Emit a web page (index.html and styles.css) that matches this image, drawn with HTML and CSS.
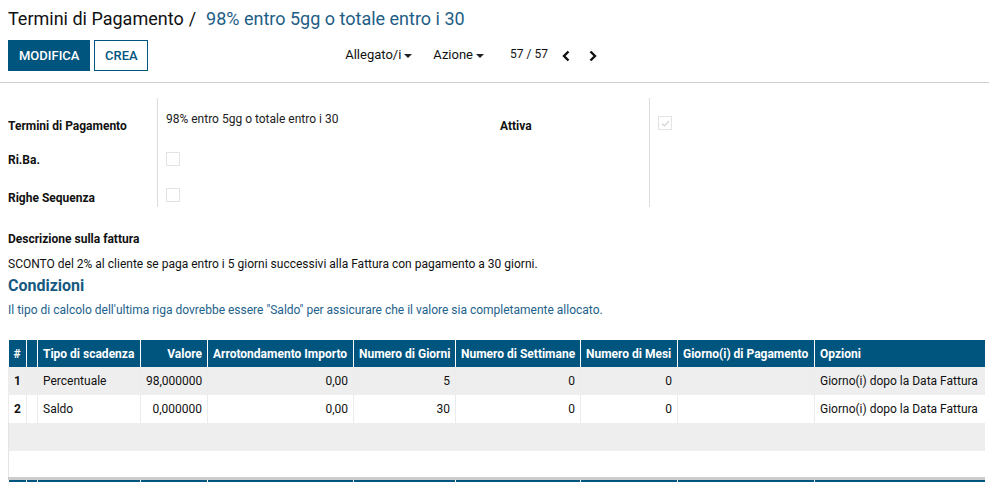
FILE: index.html
```html
<!DOCTYPE html>
<html lang="it">
<head>
<meta charset="utf-8">
<title>Termini di Pagamento</title>
<link rel="stylesheet" href="styles.css">
</head>
<body>
<div class="control-panel">
  <h1 class="breadcrumb"><span class="crumb">Termini di Pagamento</span><span class="sep">/</span><span class="current">98% entro 5gg o totale entro i 30</span></h1>
  <div class="cp-bottom">
    <div class="cp-left">
      <div class="buttons">
        <button class="btn btn-primary">MODIFICA</button>
        <button class="btn btn-secondary">CREA</button>
      </div>
      <div class="sidebar">
        <button class="dd">Allegato/i <span class="caret"></span></button>
        <button class="dd">Azione <span class="caret"></span></button>
      </div>
    </div>
    <div class="cp-right">
      <div class="pager">
        <span class="pager-value">57 / 57</span>
        <button class="pager-btn" aria-label="Precedente"><svg width="10" height="12" viewBox="0 0 10 12"><path d="M7.5 1.5 L3 6 L7.5 10.5" fill="none" stroke="#111" stroke-width="2.4"/></svg></button>
        <button class="pager-btn" aria-label="Successivo"><svg width="10" height="12" viewBox="0 0 10 12"><path d="M2.5 1.5 L7 6 L2.5 10.5" fill="none" stroke="#111" stroke-width="2.4"/></svg></button>
      </div>
    </div>
  </div>
</div>

<div class="sheet">
  <div class="groups">
    <div class="group">
      <div class="lbl r1l">Termini di Pagamento</div>
      <div class="val r1v">98% entro 5gg o totale entro i 30</div>
      <div class="lbl r2l">Ri.Ba.</div>
      <div class="val r2v"><span class="chk"></span></div>
      <div class="lbl r3l">Righe Sequenza</div>
      <div class="val r3v"><span class="chk"></span></div>
    </div>
    <div class="group">
      <div class="lbl r1l">Attiva</div>
      <div class="val r1c"><span class="chk checked"><svg width="11" height="11" viewBox="0 0 11 11"><path d="M2 5.5 L4.5 8 L9 3" fill="none" stroke="#d4d4d4" stroke-width="1.2"/></svg></span></div>
      <div class="lbl fill"></div>
      <div class="val fill"></div>
    </div>
  </div>

  <div class="desc-label">Descrizione sulla fattura</div>
  <div class="desc-text">SCONTO del 2% al cliente se paga entro i 5 giorni successivi alla Fattura con pagamento a 30 giorni.</div>
  <h2 class="section-title">Condizioni</h2>
  <p class="hint">Il tipo di calcolo dell'ultima riga dovrebbe essere "Saldo" per assicurare che il valore sia completamente allocato.</p>

  <table class="lines">
    <colgroup>
      <col class="c-num"><col class="c-blank"><col class="c-tipo"><col class="c-val"><col class="c-arr"><col class="c-gg"><col class="c-set"><col class="c-mesi"><col class="c-pag"><col class="c-opz">
    </colgroup>
    <thead>
      <tr>
        <th>#</th><th></th><th>Tipo di scadenza</th><th class="num">Valore</th><th>Arrotondamento Importo</th><th>Numero di Giorni</th><th>Numero di Settimane</th><th>Numero di Mesi</th><th>Giorno(i) di Pagamento</th><th>Opzioni</th>
      </tr>
    </thead>
    <tbody>
      <tr class="odd">
        <td class="seq">1</td><td></td><td>Percentuale</td><td class="num">98,000000</td><td class="num">0,00</td><td class="num">5</td><td class="num">0</td><td class="num">0</td><td></td><td>Giorno(i) dopo la Data Fattura</td>
      </tr>
      <tr class="even">
        <td class="seq">2</td><td></td><td>Saldo</td><td class="num">0,000000</td><td class="num">0,00</td><td class="num">30</td><td class="num">0</td><td class="num">0</td><td></td><td>Giorno(i) dopo la Data Fattura</td>
      </tr>
      <tr class="odd empty"><td colspan="10"></td></tr>
      <tr class="even empty"><td colspan="10"></td></tr>
    </tbody>
    <tfoot>
      <tr><td></td><td></td><td></td><td></td><td></td><td></td><td></td><td></td><td></td><td></td></tr>
    </tfoot>
  </table>
</div>
</body>
</html>
```

FILE: styles.css
```css
* { box-sizing: border-box; }

html, body {
  margin: 0;
  padding: 0;
  background: #fff;
}

body {
  font-family: Roboto, "Noto Sans", "Liberation Sans", sans-serif;
  font-size: 12px;
  color: #212121;
  overflow: hidden;
}

button {
  font-family: inherit;
  cursor: pointer;
}

/* ---------- control panel ---------- */
.control-panel {
  border-bottom: 1px solid #cfcfcf;
  padding: 8px 0 11px 8px;
}

.breadcrumb {
  margin: 0;
  font-size: 18px;
  font-weight: 400;
  line-height: 22px;
  color: #111;
}

.breadcrumb .sep {
  margin: 0 10px 0 5px;
}

.breadcrumb .current {
  color: #1e5d86;
}

.cp-bottom {
  display: grid;
  grid-template-columns: 476px 1fr;
  margin-top: 10px;
  height: 31px;
}

.cp-left {
  display: flex;
  justify-content: space-between;
  align-items: center;
}

.buttons {
  display: flex;
  gap: 4px;
}

.btn {
  height: 31px;
  font-size: 13px;
  font-weight: 500;
  border-radius: 0;
  padding: 0 10px;
  letter-spacing: 0;
}

.btn-primary {
  width: 82px;
  background: #00557f;
  border: 1px solid #00557f;
  color: #fff;
}

.btn-secondary {
  width: 54px;
  background: #fff;
  border: 1px solid #00557f;
  color: #00557f;
}

.sidebar {
  display: flex;
  gap: 21px;
  align-items: center;
  margin-top: -2px;
}

.dd {
  background: none;
  border: 0;
  padding: 0;
  font-size: 13px;
  color: #111;
  display: flex;
  align-items: center;
  gap: 3px;
}

.caret {
  display: inline-block;
  width: 0;
  height: 0;
  border-left: 4px solid transparent;
  border-right: 4px solid transparent;
  border-top: 4px solid #222;
  margin-top: 2px;
}

.cp-right {
  padding-left: 26px;
  display: flex;
  align-items: center;
}

.pager {
  display: flex;
  align-items: center;
  margin-top: -3px;
}

.pager-value {
  font-size: 12px;
  color: #111;
  margin-right: 13px;
}

.pager-btn {
  background: none;
  border: 0;
  padding: 0;
  width: 27px;
  height: 20px;
  display: flex;
  align-items: center;
  justify-content: flex-start;
  margin-top: 3px;
}

/* ---------- sheet ---------- */
.sheet {
  padding: 15px 5px 0 8px;
}

.groups {
  display: grid;
  grid-template-columns: 492px 1fr;
}

.group {
  display: grid;
  grid-template-columns: 150px 1fr;
  grid-template-rows: 42px 36px 31px;
}

.lbl {
  font-weight: 700;
  font-size: 12px;
  line-height: 16px;
  color: #111;
  border-right: 1px solid #dcdcdc;
}

.val {
  padding-left: 8px;
  line-height: 16px;
}

.r1l { padding-top: 20px; }
.r1v { padding-top: 13px; }
.r1c { padding-top: 18px; }
.r2l { padding-top: 12px; }
.r2v { padding-top: 12px; }
.r3l { padding-top: 14px; }
.r3v { padding-top: 12px; }
.fill { grid-row: span 2; }

.chk {
  display: block;
  width: 14px;
  height: 14px;
  border: 1px solid #e3e3e3;
  background: #fff;
}

.chk.checked {
  display: flex;
  align-items: center;
  justify-content: center;
}

.desc-label {
  margin-top: 24px;
  font-weight: 700;
  line-height: 16px;
  color: #111;
}

.desc-text {
  margin-top: 9px;
  line-height: 16px;
  color: #111;
}

.section-title {
  margin: 4px 0 0;
  font-size: 16px;
  font-weight: 700;
  line-height: 20px;
  color: #16597f;
}

.hint {
  margin: 6px 0 0;
  line-height: 16px;
  color: #22618b;
}

/* ---------- table ---------- */
.lines {
  margin-top: 22px;
  width: 976px;
  max-width: 976px;
  table-layout: fixed;
  border-collapse: collapse;
  font-size: 12px;
}

.c-num { width: 18px; }
.c-blank { width: 11px; }
.c-tipo { width: 103px; }
.c-val { width: 67px; }
.c-arr { width: 146px; }
.c-gg { width: 102px; }
.c-set { width: 125px; }
.c-mesi { width: 97px; }
.c-pag { width: 137px; }
.c-opz { width: 170px; }

.lines th {
  background: #00557f;
  color: #fff;
  font-weight: 700;
  height: 27px;
  padding: 0 5px;
  text-align: left;
  white-space: nowrap;
  overflow: hidden;
  border-left: 1px solid #fff;
}

.lines th:first-child { border-left: 0; }

.lines th.num { text-align: right; }

.lines td {
  height: 28px;
  padding: 0 5px;
  white-space: nowrap;
  overflow: hidden;
  border-left: 1px solid #ececec;
  color: #111;
}

.lines td.num { text-align: right; }
.lines td.seq { font-weight: 700; }

.lines tbody tr.odd { background: #eeeeee; }
.lines tbody tr.even { background: #fff; }
.lines tbody tr.empty td { height: 28px; border-left: 1px solid #e4e4e4; }
.lines tbody tr.empty.even td { height: 27px; }

.lines tfoot td {
  background: #00557f;
  height: 27px;
  border-top: 3px solid #cccccc;
  border-left: 1px solid #fff;
}

.lines tfoot td:first-child { border-left: 0; }
```
